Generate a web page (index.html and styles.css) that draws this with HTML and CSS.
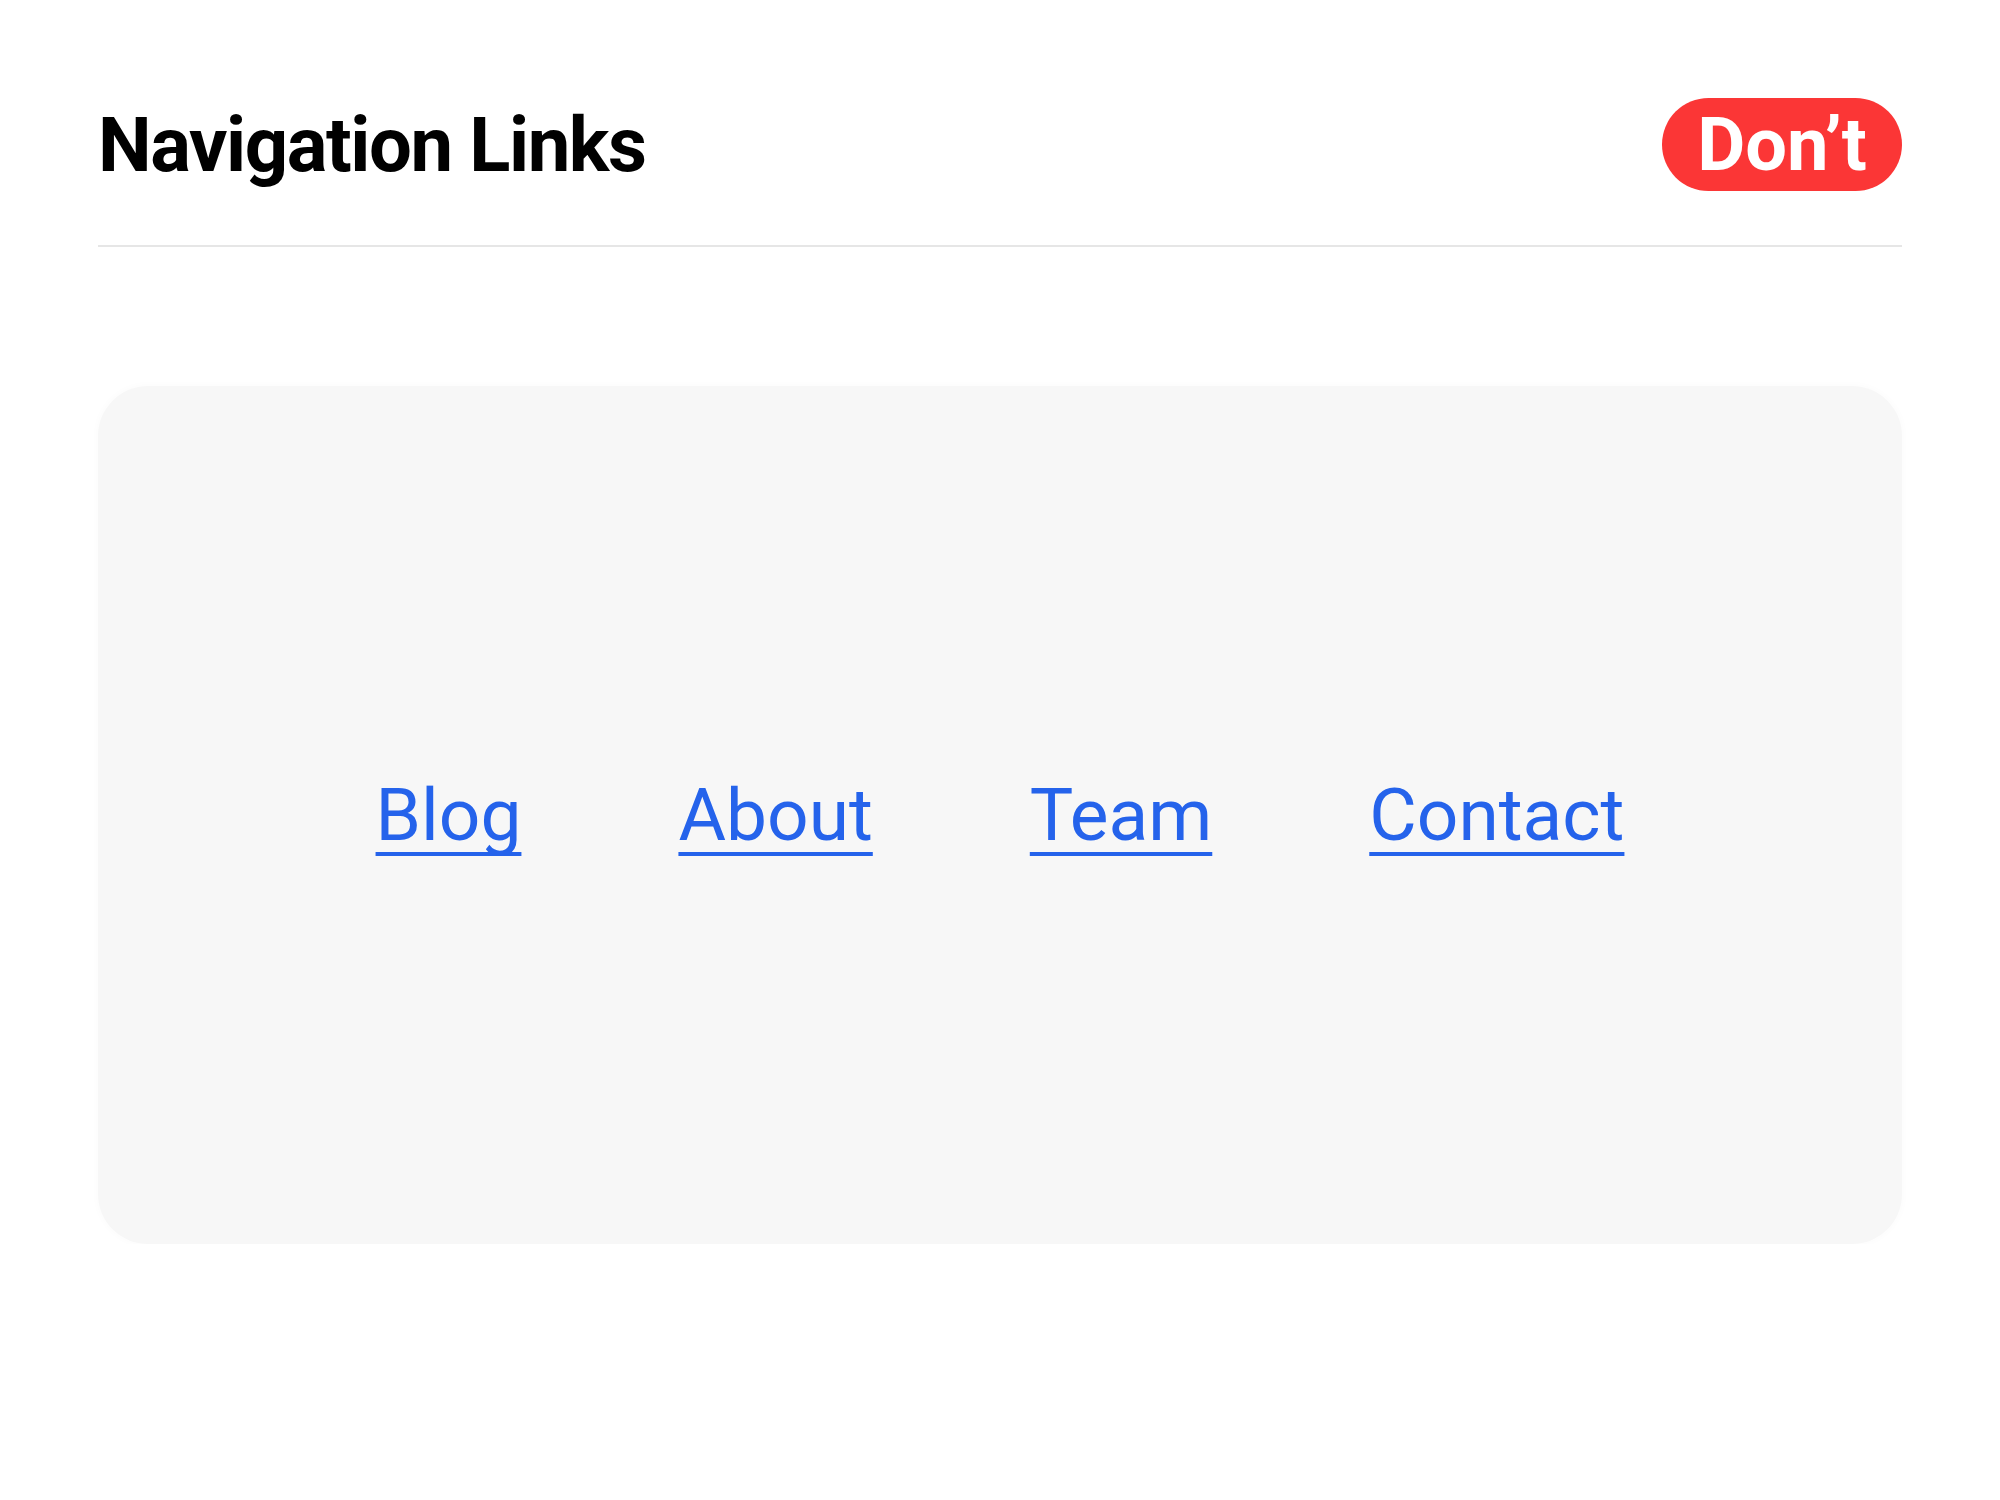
FILE: index.html
```html
<!DOCTYPE html>
<html lang="en">
<head>
<meta charset="utf-8">
<title>Navigation Links</title>
<link rel="stylesheet" href="styles.css">
</head>
<body>
<div class="page">
  <header class="header">
    <h1 class="title">Navigation Links</h1>
    <span class="badge">Don’t</span>
  </header>
  <section class="card">
    <nav class="nav">
      <a class="nav-link" href="#">Blog</a>
      <a class="nav-link" href="#">About</a>
      <a class="nav-link" href="#">Team</a>
      <a class="nav-link" href="#">Contact</a>
    </nav>
  </section>
</div>
</body>
</html>
```
FILE: styles.css
```css
html, body {
  margin: 0;
  padding: 0;
  background: #ffffff;
}
body {
  font-family: Roboto, "Liberation Sans", sans-serif;
  color: #000;
}
.page {
  padding: 98px 98px 0 98px;
}
.header {
  display: flex;
  align-items: center;
  justify-content: space-between;
  height: 93px;
  padding-bottom: 54px;
  border-bottom: 2px solid #e6e6e6;
}
.title {
  margin: 0;
  font-size: 76px;
  font-weight: 700;
  letter-spacing: -1.4px;
  line-height: 1;
}
.badge {
  display: flex;
  align-items: center;
  justify-content: center;
  height: 93px;
  width: 240px;
  box-sizing: border-box;
  border-radius: 47px;
  background: #fb3636;
  color: #fff;
  font-size: 74px;
  font-weight: 700;
  letter-spacing: 0;
  line-height: 1;
}
.card {
  margin-top: 139px;
  height: 858px;
  background: #f7f7f7;
  border-radius: 50px;
  box-shadow: 0 0 6px 2px rgba(0,0,0,0.015);
  display: flex;
  align-items: center;
  justify-content: center;
}
.nav {
  display: flex;
  gap: 157px;
  align-items: baseline;
}
.nav-link {
  color: #2563eb;
  font-size: 73px;
  font-weight: 400;
  line-height: 1;
  text-decoration: underline;
  text-decoration-thickness: 4px;
  text-underline-offset: 12px;
  text-decoration-skip-ink: none;
}
```
